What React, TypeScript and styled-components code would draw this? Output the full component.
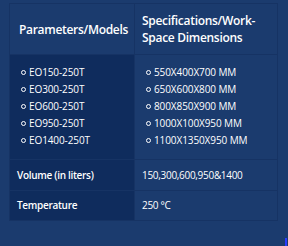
import React from "react";
import styled, { createGlobalStyle } from "styled-components";

const Global = createGlobalStyle`
  html, body {
    margin: 0;
    padding: 0;
    background: #1b3b6e;
  }
  body {
    font-family: "Open Sans", "Noto Sans", Arial, sans-serif;
    color: #ffffff;
    width: 288px;
    height: 246px;
    overflow: hidden;
  }
`;

const Page = styled.div`
  padding: 3px 11px 0 9px;
`;

const Table = styled.table`
  width: 268px;
  border-collapse: collapse;
  table-layout: fixed;
`;

const Col = styled.col<{ $w: number }>`
  width: ${(p) => p.$w}px;
`;

const Th = styled.th`
  text-align: left;
  vertical-align: middle;
  height: 50px;
  padding: 0 6px 0 9px;
  font-size: 12px;
  line-height: 17px;
  font-weight: 600;
  letter-spacing: -0.3px;
  background: #1b3b6e;
  border: 1px solid #163364;
  &:nth-child(2) {
    padding-left: 7px;
  }
`;

const Td = styled.td<{ $dark?: boolean; $bold?: boolean; $h: number }>`
  height: ${(p) => p.$h}px;
  padding: 0 7px;
  vertical-align: middle;
  font-size: 10px;
  line-height: 17px;
  font-weight: ${(p) => (p.$bold ? 600 : 400)};
  letter-spacing: -0.3px;
  background: ${(p) => (p.$dark ? "#0f2c5d" : "#1b3b6e")};
  border: 1px solid #163364;
`;

const ListCell = styled(Td)`
  padding: 0;
`;

const List = styled.ul`
  list-style: none;
  margin: 0;
  padding: 9px 0 10px 11px;
`;

const Item = styled.li`
  display: flex;
  align-items: center;
  gap: 3px;
  letter-spacing: -0.1px;
  &::before {
    content: "";
    width: 3px;
    height: 3px;
    border: 1px solid #ffffff;
    border-radius: 50%;
    flex: none;
  }
`;

const Corner = styled.div`
  position: fixed;
  right: 1px;
  bottom: 0;
  width: 2px;
  height: 8px;
  background: #2a3cff;
`;

const models = ["EO150-250T", "EO300-250T", "EO600-250T", "EO950-250T", "EO1400-250T"];
const sizes = [
  "550X400X700 MM",
  "650X600X800 MM",
  "800X850X900 MM",
  "1000X100X950 MM",
  "1100X1350X950 MM",
];

export default function App() {
  return (
    <>
      <Global />
      <Page>
        <Table>
          <colgroup>
            <Col $w={125} />
            <Col $w={143} />
          </colgroup>
          <thead>
            <tr>
              <Th>Parameters/Models</Th>
              <Th>Specifications/Work-Space Dimensions</Th>
            </tr>
          </thead>
          <tbody>
            <tr>
              <ListCell $dark $h={104}>
                <List>
                  {models.map((m) => (
                    <Item key={m}>{m}</Item>
                  ))}
                </List>
              </ListCell>
              <ListCell $h={104}>
                <List>
                  {sizes.map((s) => (
                    <Item key={s}>{s}</Item>
                  ))}
                </List>
              </ListCell>
            </tr>
            <tr>
              <Td $dark $bold $h={30}>Volume (in liters)</Td>
              <Td $h={30}>150,300,600,950&amp;1400</Td>
            </tr>
            <tr>
              <Td $dark $bold $h={29}>Temperature</Td>
              <Td $h={29}>250 °C</Td>
            </tr>
          </tbody>
        </Table>
      </Page>
      <Corner />
    </>
  );
}
